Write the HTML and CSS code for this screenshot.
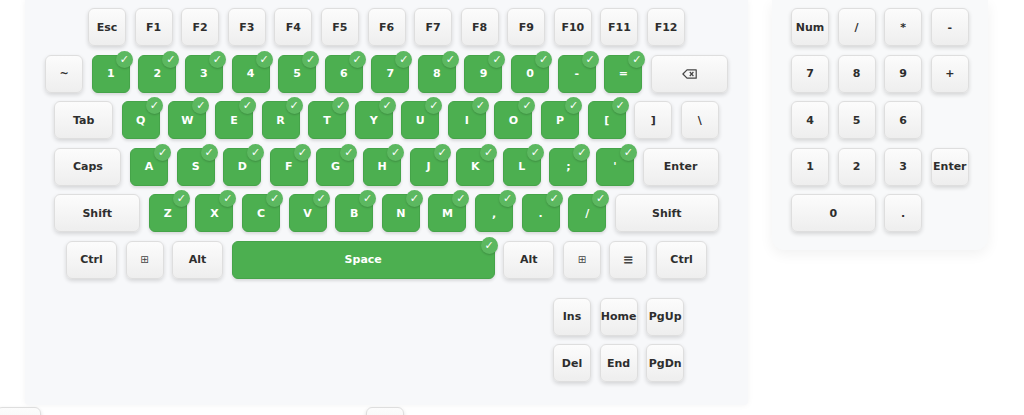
FILE: index.html
```html
<!DOCTYPE html>
<html>
<head>
<meta charset="utf-8">
<link rel="stylesheet" href="styles.css">
</head>
<body>
<div class="page">
  <div class="top">
    <div class="board">
      <div class="row">
        <div class="key">Esc</div><div class="key">F1</div><div class="key">F2</div><div class="key">F3</div><div class="key">F4</div><div class="key">F5</div><div class="key">F6</div><div class="key">F7</div><div class="key">F8</div><div class="key">F9</div><div class="key">F10</div><div class="key">F11</div><div class="key">F12</div>
      </div>
      <div class="row">
        <div class="key">~</div>
        <div class="key on">1<span class="ok">✓</span></div>
        <div class="key on">2<span class="ok">✓</span></div>
        <div class="key on">3<span class="ok">✓</span></div>
        <div class="key on">4<span class="ok">✓</span></div>
        <div class="key on">5<span class="ok">✓</span></div>
        <div class="key on">6<span class="ok">✓</span></div>
        <div class="key on">7<span class="ok">✓</span></div>
        <div class="key on">8<span class="ok">✓</span></div>
        <div class="key on">9<span class="ok">✓</span></div>
        <div class="key on">0<span class="ok">✓</span></div>
        <div class="key on">-<span class="ok">✓</span></div>
        <div class="key on">=<span class="ok">✓</span></div>
        <div class="key w77"><svg class="bs" width="15" height="10" viewBox="0 0 15 10"><path d="M5 0.8 H14.2 V9.2 H5 L0.9 5 Z" fill="none" stroke="#444" stroke-width="1.2" stroke-linejoin="round"/><path d="M7.8 3 L11.4 7 M11.4 3 L7.8 7" stroke="#444" stroke-width="1.2"/></svg></div>
      </div>
      <div class="row">
        <div class="key w59">Tab</div>
        <div class="key on">Q<span class="ok">✓</span></div>
        <div class="key on">W<span class="ok">✓</span></div>
        <div class="key on">E<span class="ok">✓</span></div>
        <div class="key on">R<span class="ok">✓</span></div>
        <div class="key on">T<span class="ok">✓</span></div>
        <div class="key on">Y<span class="ok">✓</span></div>
        <div class="key on">U<span class="ok">✓</span></div>
        <div class="key on">I<span class="ok">✓</span></div>
        <div class="key on">O<span class="ok">✓</span></div>
        <div class="key on">P<span class="ok">✓</span></div>
        <div class="key on">[<span class="ok">✓</span></div>
        <div class="key">]</div>
        <div class="key">\</div>
      </div>
      <div class="row">
        <div class="key w67">Caps</div>
        <div class="key on">A<span class="ok">✓</span></div>
        <div class="key on">S<span class="ok">✓</span></div>
        <div class="key on">D<span class="ok">✓</span></div>
        <div class="key on">F<span class="ok">✓</span></div>
        <div class="key on">G<span class="ok">✓</span></div>
        <div class="key on">H<span class="ok">✓</span></div>
        <div class="key on">J<span class="ok">✓</span></div>
        <div class="key on">K<span class="ok">✓</span></div>
        <div class="key on">L<span class="ok">✓</span></div>
        <div class="key on">;<span class="ok">✓</span></div>
        <div class="key on">'<span class="ok">✓</span></div>
        <div class="key w76">Enter</div>
      </div>
      <div class="row">
        <div class="key w86">Shift</div>
        <div class="key on">Z<span class="ok">✓</span></div>
        <div class="key on">X<span class="ok">✓</span></div>
        <div class="key on">C<span class="ok">✓</span></div>
        <div class="key on">V<span class="ok">✓</span></div>
        <div class="key on">B<span class="ok">✓</span></div>
        <div class="key on">N<span class="ok">✓</span></div>
        <div class="key on">M<span class="ok">✓</span></div>
        <div class="key on">,<span class="ok">✓</span></div>
        <div class="key on">.<span class="ok">✓</span></div>
        <div class="key on">/<span class="ok">✓</span></div>
        <div class="key w104">Shift</div>
      </div>
      <div class="row">
        <div class="key w51">Ctrl</div>
        <div class="key sym">⊞</div>
        <div class="key w51">Alt</div>
        <div class="key on w263">Space<span class="ok">✓</span></div>
        <div class="key w51">Alt</div>
        <div class="key sym">⊞</div>
        <div class="key menu">≡</div>
        <div class="key w51">Ctrl</div>
      </div>
      <div class="nav">
        <div class="key">Ins</div><div class="key">Home</div><div class="key">PgUp</div>
        <div class="key">Del</div><div class="key">End</div><div class="key">PgDn</div>
      </div>
    </div>
    <div class="numpad">
      <div class="key">Num</div><div class="key">/</div><div class="key">*</div><div class="key">-</div>
      <div class="key">7</div><div class="key">8</div><div class="key">9</div><div class="key">+</div>
      <div class="key">4</div><div class="key">5</div><div class="key">6</div><div class="blank"></div>
      <div class="key">1</div><div class="key">2</div><div class="key">3</div><div class="key">Enter</div>
      <div class="key zero">0</div><div class="key">.</div>
    </div>
  </div>
  <div class="below">
    <div class="key stub1"></div>
    <div class="key stub2"></div>
  </div>
</div>
</body>
</html>
```
FILE: styles.css
```css
html, body {
  margin: 0;
  padding: 0;
  background: #ffffff;
  overflow: hidden;
}
body {
  width: 1024px;
  height: 415px;
  font-family: "DejaVu Sans", "Liberation Sans", sans-serif;
}
.page {
  display: flex;
  flex-direction: column;
  height: 415px;
  overflow: hidden;
}
.top {
  display: flex;
  align-items: flex-start;
}
.board {
  margin-left: 25px;
  width: 723px;
  box-sizing: border-box;
  padding: 8px 20px 23px 20px;
  background: #f7f8fa;
  border-radius: 0 0 4px 4px;
  box-shadow: 0 0 6px rgba(0, 0, 0, 0.05);
  display: flex;
  flex-direction: column;
  gap: 8.6px;
}
.row {
  display: flex;
  justify-content: center;
  gap: 8.6px;
}
.key {
  position: relative;
  width: 38px;
  height: 38px;
  box-sizing: border-box;
  flex: none;
  display: flex;
  align-items: center;
  justify-content: center;
  font-size: 11px;
  font-weight: bold;
  color: #2e2e2e;
  background: linear-gradient(#fcfcfc, #eeeeee);
  border: 1px solid #dedede;
  border-radius: 6px;
  box-shadow: 0 2px 4px rgba(0, 0, 0, 0.14);
}
.key.on {
  background: #4caf50;
  border: 1px solid #45a449;
  color: #ffffff;
  box-shadow: 0 2px 3px rgba(0, 0, 0, 0.12);
}
.ok {
  position: absolute;
  top: -5px;
  right: -4px;
  width: 17px;
  height: 17px;
  border-radius: 50%;
  background: #5cb860;
  box-shadow: 0 1px 2px rgba(0, 0, 0, 0.18);
  color: #ffffff;
  font-size: 11px;
  font-weight: bold;
  display: flex;
  align-items: center;
  justify-content: center;
  line-height: 1;
}
.w51 { width: 51px; }
.w59 { width: 59px; }
.w67 { width: 67px; }
.w76 { width: 76px; }
.w77 { width: 77px; }
.w86 { width: 86px; }
.w104 { width: 104px; }
.w263 { width: 263px; }
.sym { font-size: 10px; font-weight: normal; color: #444; }
.menu { font-size: 13px; font-weight: bold; color: #444; }
.bs { display: block; }
.nav {
  margin-top: 10px;
  margin-left: 508px;
  display: grid;
  grid-template-columns: repeat(3, 38px);
  gap: 8.6px;
}
.numpad {
  margin-left: 24px;
  width: 216px;
  box-sizing: border-box;
  padding: 8px 19px 18px 19px;
  background: #f8f9fa;
  border-radius: 0 0 12px 12px;
  box-shadow: 0 4px 14px rgba(0, 0, 0, 0.06);
  display: grid;
  grid-template-columns: repeat(4, 38px);
  grid-auto-rows: 38px;
  gap: 8.6px;
}
.numpad .zero { width: auto; grid-column: span 2; }
.below {
  display: flex;
  margin-top: 2px;
}
.stub1 {
  margin-left: -4px;
  width: 45px;
}
.stub2 {
  margin-left: 325px;
}
```
